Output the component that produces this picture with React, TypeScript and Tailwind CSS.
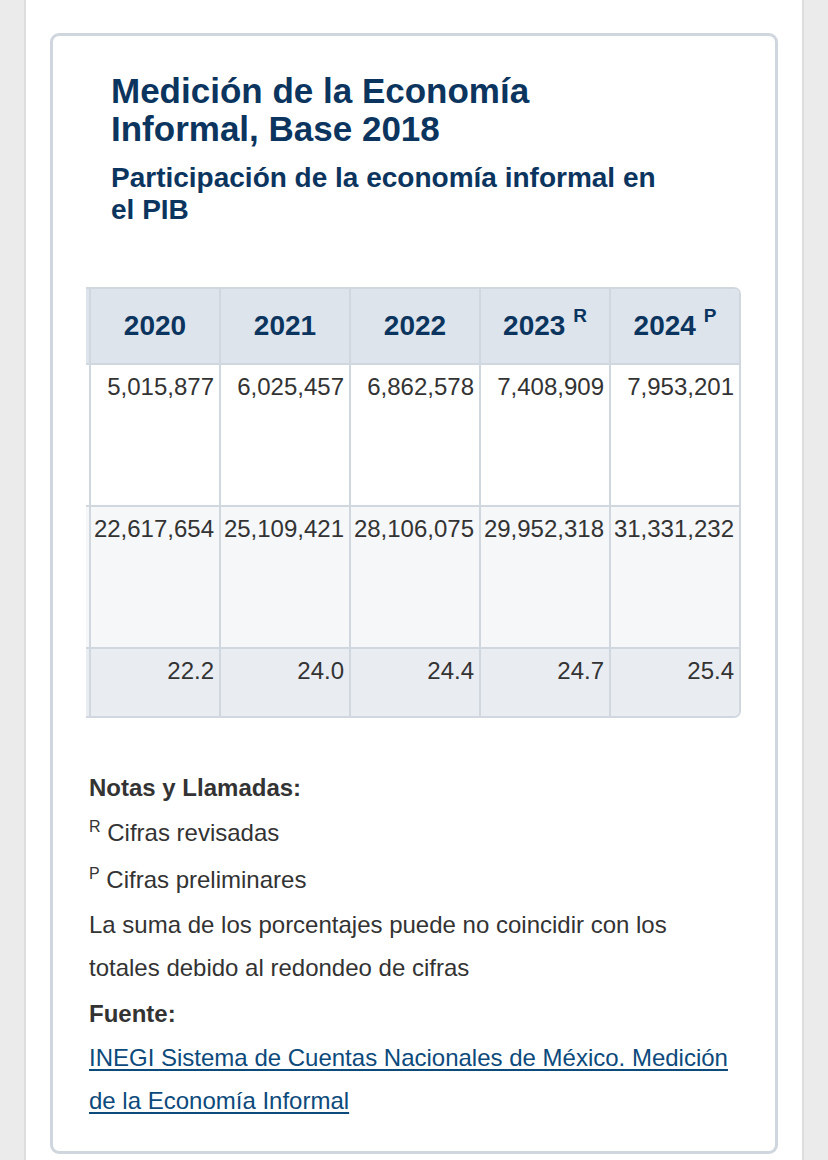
import React from "react";

const years: { y: string; s?: string }[] = [
  { y: "2020" },
  { y: "2021" },
  { y: "2022" },
  { y: "2023", s: "R" },
  { y: "2024", s: "P" },
];

const row1 = ["5,015,877", "6,025,457", "6,862,578", "7,408,909", "7,953,201"];
const row2 = ["22,617,654", "25,109,421", "28,106,075", "29,952,318", "31,331,232"];
const row3 = ["22.2", "24.0", "24.4", "24.7", "25.4"];

function BodyRow({ values, bg, h }: { values: string[]; bg: string; h: string }) {
  return (
    <div className={`flex border-t-2 border-[#d0d7df] ${bg} ${h}`}>
      <div className="w-[3px] shrink-0" />
      {values.map((v) => (
        <div
          key={v}
          className="w-[130px] shrink-0 border-l-2 border-[#d0d7df] pr-[5px] pt-[8px] text-right text-[24px] leading-[28px] text-[#333333] whitespace-nowrap"
        >
          {v}
        </div>
      ))}
    </div>
  );
}

export default function App() {
  return (
    <div className="min-h-screen bg-[#ebebeb] font-['Liberation_Sans',Arial,sans-serif]">
      <div className="ml-[24px] w-[780px] min-h-[1160px] border-x-2 border-[#dddddd] bg-white pt-[33px]">
        <div className="mx-[24px] rounded-[9px] border-[3px] border-[#cfd6de] bg-white pb-[29px]">
          <div className="ml-[58px] pt-[36px] text-[#0b355e]">
            <h1 className="text-[35px] font-bold leading-[38px]">
              <span className="block whitespace-nowrap">Medición de la Economía</span>
              <span className="block whitespace-nowrap">Informal, Base 2018</span>
            </h1>
            <h2 className="mt-[14px] text-[28px] font-bold leading-[32px]">
              <span className="block whitespace-nowrap">Participación de la economía informal en</span>
              <span className="block whitespace-nowrap">el PIB</span>
            </h2>
          </div>

          <div className="ml-[33px] mt-[61px] w-[655px] overflow-hidden rounded-r-[7px] border-y-2 border-r-2 border-[#d0d7df]">
            <div className="flex h-[74px] bg-[#dee4eb]">
              <div className="w-[3px] shrink-0" />
              {years.map((c) => (
                <div
                  key={c.y}
                  className="flex w-[130px] shrink-0 items-center justify-center border-l-2 border-[#d0d7df] text-[28px] font-bold text-[#0b355e] whitespace-nowrap"
                >
                  <span>
                    {c.y}
                    {c.s ? (
                      <>
                        {" "}
                        <sup className="top-[-13px] text-[19px]">{c.s}</sup>
                      </>
                    ) : null}
                  </span>
                </div>
              ))}
            </div>
            <BodyRow values={row1} bg="bg-white" h="h-[142px]" />
            <BodyRow values={row2} bg="bg-[#f5f7f9]" h="h-[142px]" />
            <BodyRow values={row3} bg="bg-[#e9edf2]" h="h-[69px]" />
          </div>

          <div className="ml-[36px] mt-[47px] text-[24px] leading-[45px] text-[#333333]">
            <p className="font-bold">Notas y Llamadas:</p>
            <p>
              <sup className="top-[-9px] text-[16px]">R</sup> Cifras revisadas
            </p>
            <p className="mt-[2px]">
              <sup className="top-[-9px] text-[16px]">P</sup> Cifras preliminares
            </p>
            <p className="mt-[1px]">
              <span className="block whitespace-nowrap leading-[43px]">La suma de los porcentajes puede no coincidir con los</span>
              <span className="block whitespace-nowrap leading-[43px]">totales debido al redondeo de cifras</span>
            </p>
            <p className="mt-[2px] font-bold">Fuente:</p>
            <p className="leading-[43px]">
              <a href="#" className="text-[#0d4a7c] underline decoration-[1.5px] underline-offset-[3px]">
                <span className="block whitespace-nowrap">INEGI Sistema de Cuentas Nacionales de México. Medición</span>
                <span className="inline-block whitespace-nowrap underline">de la Economía Informal</span>
              </a>
            </p>
          </div>
        </div>
      </div>
    </div>
  );
}
